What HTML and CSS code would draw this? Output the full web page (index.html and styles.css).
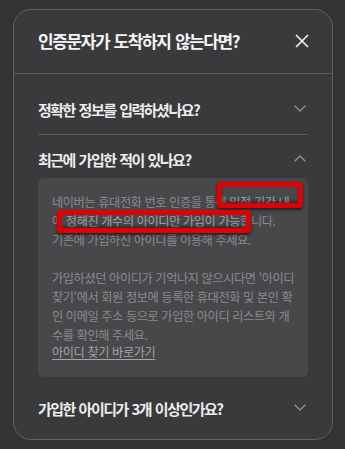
FILE: index.html
```html
<!DOCTYPE html>
<html lang="ko">
<head>
<meta charset="utf-8">
<link rel="stylesheet" href="styles.css">
</head>
<body>
<div class="modal">
  <div class="modal-head">
    <h2 class="modal-title">인증문자가 도착하지 않는다면?</h2>
    <svg class="close" width="14" height="14" viewBox="0 0 14 14"><path d="M1 1L13 13M13 1L1 13" stroke="#f2f2f2" stroke-width="1.6" fill="none"/></svg>
  </div>
  <div class="modal-body">
    <div class="item item-first">
      <div class="item-head">
        <span class="item-title">정확한 정보를 입력하셨나요?</span>
        <svg class="chev" width="12" height="7" viewBox="0 0 12 7"><path d="M0.7 0.7L6 6L11.3 0.7" stroke="#8e8e93" stroke-width="1.4" fill="none"/></svg>
      </div>
    </div>
    <div class="item item-open">
      <div class="item-head">
        <span class="item-title">최근에 가입한 적이 있나요?</span>
        <svg class="chev" width="12" height="7" viewBox="0 0 12 7"><path d="M0.7 6.3L6 1L11.3 6.3" stroke="#8e8e93" stroke-width="1.4" fill="none"/></svg>
      </div>
      <div class="answer">
        <p class="para">네이버는 휴대전화 번호 인증을 통해 <span class="hl">일정 기간 내</span><br>에 <span class="hl">정해진 개수의 아이디만 가입이 가능</span>합니다.<br>기존에 가입하신 아이디를 이용해 주세요.</p>
        <p class="para para-last">가입하셨던 아이디가 기억나지 않으시다면 '아이디<br>찾기'에서 회원 정보에 등록한 휴대전화 및 본인 확<br>인 이메일 주소 등으로 가입한 아이디 리스트와 개<br>수를 확인해 주세요.</p>
        <a class="link">아이디 찾기 바로가기</a>
        <div class="mark mark-1"></div>
        <div class="mark mark-2"></div>
      </div>
    </div>
    <div class="item item-last">
      <div class="item-head">
        <span class="item-title">가입한 아이디가 3개 이상인가요?</span>
        <svg class="chev" width="12" height="7" viewBox="0 0 12 7"><path d="M0.7 0.7L6 6L11.3 0.7" stroke="#8e8e93" stroke-width="1.4" fill="none"/></svg>
      </div>
    </div>
  </div>
</div>
</body>
</html>
```

FILE: styles.css
```css
* { box-sizing: border-box; }
html, body { margin: 0; padding: 0; }
body {
  background: #333335;
  font-family: "Noto Sans CJK KR", "Noto Sans", sans-serif;
  width: 345px;
  height: 449px;
  overflow: hidden;
  padding: 9px 12px 0 13px;
}
.modal {
  width: 320px;
  height: 431px;
  background: #3a3a3c;
  border: 1px solid #616164;
  border-radius: 18px;
  overflow: hidden;
}
.modal-head {
  height: 64px;
  display: flex;
  align-items: center;
  justify-content: space-between;
  padding: 0 23px 2px 24px;
  border-bottom: 1px solid #5b5b5e;
}
.modal-title {
  margin: 0;
  font-size: 17px;
  font-weight: 700;
  color: #f4f4f4;
  letter-spacing: -1.4px;
  word-spacing: 1px;
  line-height: 20px;
}
.close { display: block; }
.modal-body { padding: 10px 24px 0 24px; }
.item-head {
  display: flex;
  align-items: center;
  justify-content: space-between;
  height: 20px;
  padding-right: 2px;
}
.item-title {
  font-size: 15px;
  font-weight: 700;
  color: #ececec;
  letter-spacing: -1.5px;
  word-spacing: 1px;
  line-height: 20px;
}
.chev { display: block; margin-top: -3px; }
.item-first { padding: 16px 0 14px; border-bottom: 1px solid #5b5b5e; }
.item-open { padding: 15px 0 0; }
.answer {
  position: relative;
  margin-top: 8px;
  background: #48484a;
  border-radius: 6px;
  padding: 15px 8px 16px 14px;
  height: 199px;
}
.para {
  margin: 0 0 18px;
  font-size: 12.2px;
  line-height: 19.2px;
  color: #8a8a8f;
  letter-spacing: -0.4px;
  word-spacing: 0;
  white-space: nowrap;
}
.para-last { margin-bottom: 0; }
.hl { color: #a0a0a5; }
.link {
  display: block;
  font-size: 12.2px;
  line-height: 14px;
  color: #a3a3a8;
  letter-spacing: -0.4px;
  text-decoration: underline;
  text-underline-offset: 2px;
}
.mark {
  position: absolute;
  border: 5px solid #e10000;
  border-radius: 4px;
  box-shadow: 0 2px 3px rgba(0,0,0,0.55), inset 0 -2px 2px rgba(0,0,0,0.35);
}
.mark-1 { left: 179px; top: 4px; width: 86px; height: 26px; }
.mark-2 { left: 19px; top: 32px; width: 194px; height: 23px; }
.item-last { padding: 22px 0 0; }
```
